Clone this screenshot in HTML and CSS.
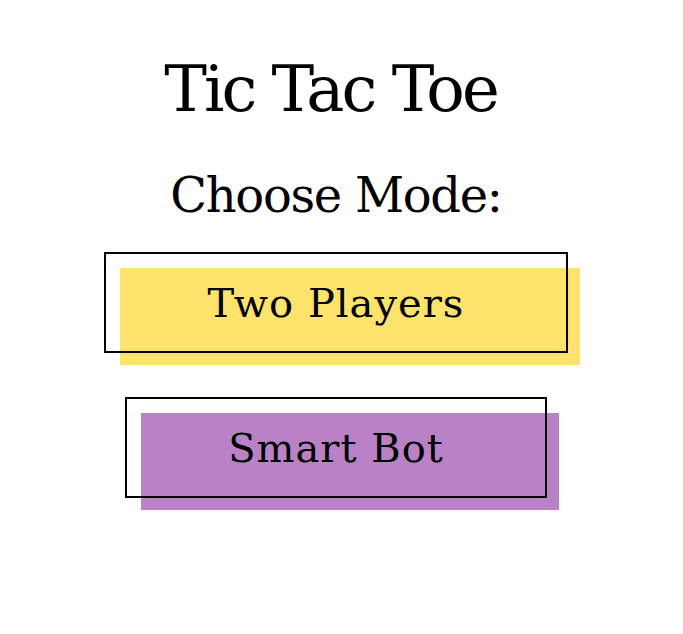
FILE: index.html
```html
<!DOCTYPE html>
<html lang="en">
<head>
<meta charset="utf-8">
<title>Tic Tac Toe</title>
<link rel="stylesheet" href="styles.css">
</head>
<body>
<main class="menu">
  <h1 class="title">Tic Tac Toe</h1>
  <h2 class="subtitle">Choose Mode:</h2>
  <button class="mode mode-two">Two Players</button>
  <button class="mode mode-bot">Smart Bot</button>
</main>
</body>
</html>
```
FILE: styles.css
```css
html, body {
  margin: 0;
  padding: 0;
  background: #ffffff;
}

.menu {
  display: flex;
  flex-direction: column;
  align-items: center;
  padding: 57px 11px 60px 0;
  font-family: "DejaVu Serif", serif;
  color: #000;
}

.title {
  margin: 0 11px 0 0;
  font-size: 64px;
  font-weight: normal;
  line-height: 1;
  letter-spacing: -3px;
}

.subtitle {
  margin: 50px 0 0;
  font-size: 48px;
  font-weight: normal;
  line-height: 1;
  letter-spacing: -1.3px;
}

.mode {
  position: relative;
  z-index: 0;
  box-sizing: border-box;
  height: 101px;
  border: none;
  background: transparent;
  font-family: "DejaVu Serif", serif;
  font-size: 40px;
  line-height: 1;
  letter-spacing: 1px;
  color: #000;
  padding: 0;
  cursor: pointer;
}

.mode::before {
  content: "";
  position: absolute;
  left: 16px;
  top: 16px;
  right: -12px;
  bottom: -12px;
  z-index: -1;
}

.mode::after {
  content: "";
  position: absolute;
  inset: 0;
  border: 2px solid #000;
}

.mode-two {
  width: 464px;
  margin-top: 33px;
}

.mode-two::before {
  background: #fde36c;
}

.mode-bot {
  width: 422px;
  margin-top: 44px;
}

.mode-bot::before {
  background: #ba82c6;
}
```
